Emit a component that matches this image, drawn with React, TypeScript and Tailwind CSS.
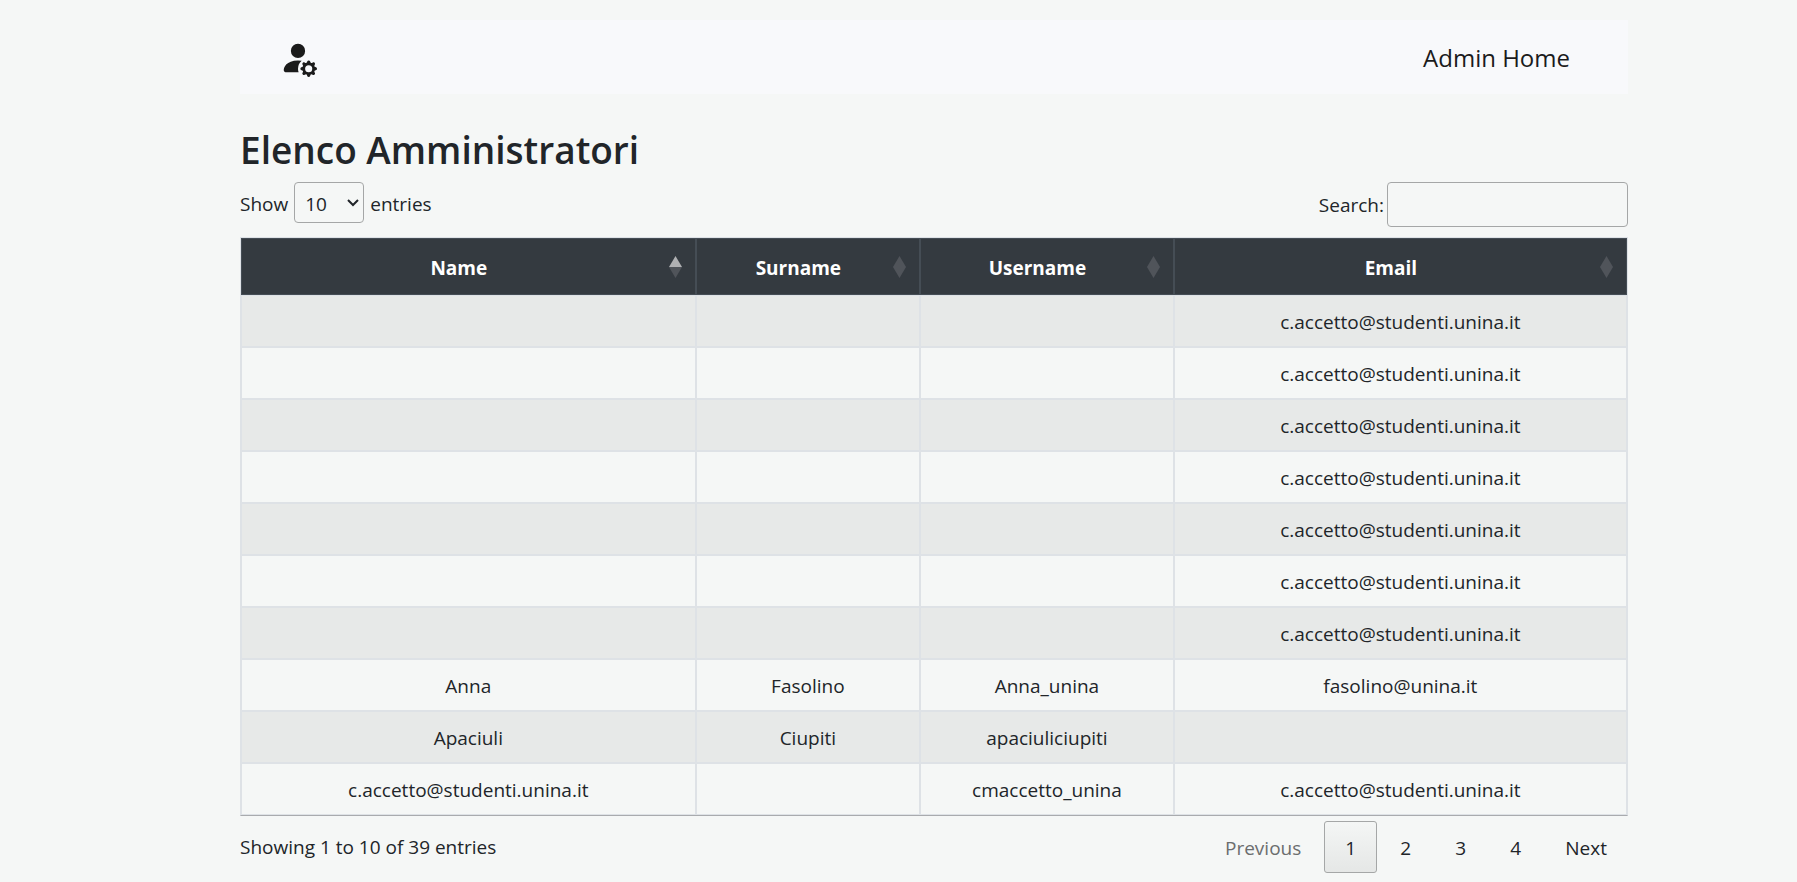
import { useState } from "react";
import { BsPersonFillGear } from "react-icons/bs";

type Admin = { name: string; surname: string; username: string; email: string };

const blank: Admin = { name: "", surname: "", username: "", email: "c.accetto@studenti.unina.it" };

const admins: Admin[] = [
  blank,
  blank,
  blank,
  blank,
  blank,
  blank,
  blank,
  { name: "Anna", surname: "Fasolino", username: "Anna_unina", email: "fasolino@unina.it" },
  { name: "Apaciuli", surname: "Ciupiti", username: "apaciuliciupiti", email: "" },
  { name: "c.accetto@studenti.unina.it", surname: "", username: "cmaccetto_unina", email: "c.accetto@studenti.unina.it" },
];

const columns = ["Name", "Surname", "Username", "Email"];

function SortIcon({ ascending }: { ascending: boolean }) {
  return (
    <svg aria-hidden="true" viewBox="0 0 13 22" className="h-[22px] w-[13px] shrink-0">
      <path d="M6.5 0 13 11H0z" fill={ascending ? "#b0b1b3" : "#50545a"} />
      <path d="M0 11h13L6.5 22z" fill="#50545a" />
    </svg>
  );
}

function Navbar() {
  return (
    <nav className="flex h-[74px] items-center justify-between bg-[#f8f9fb] pr-[58px] pl-[39px] text-[#1b1b1b]">
      <a href="#" aria-label="Admin" className="pt-0.5">
        <BsPersonFillGear className="size-[38px]" />
      </a>
      <a href="#" className="pt-0.5 text-[24px] leading-9">
        Admin Home
      </a>
    </nav>
  );
}

function AdminTable() {
  return (
    <table className="w-full table-fixed border-separate border-spacing-0 border border-[#dee2e6] border-b-[#a9abae] text-center">
      <colgroup>
        <col className="w-[32.8%]" />
        <col className="w-[16.2%]" />
        <col className="w-[18.3%]" />
        <col className="w-[32.7%]" />
      </colgroup>
      <thead>
        <tr>
          {columns.map((column, index) => (
            <th
              key={column}
              aria-sort={index === 0 ? "ascending" : "none"}
              className="border border-[#454d55] bg-[#343a40] p-0 font-bold text-white"
            >
              <button type="button" className="flex h-[55px] w-full items-center gap-[3px] pr-[13px] pl-[10px]">
                <span className="flex-1 pt-0.5">{column}</span>
                <SortIcon ascending={index === 0} />
              </button>
            </th>
          ))}
        </tr>
      </thead>
      <tbody>
        {admins.map((admin, index) => (
          <tr key={index} className="h-[52px] odd:bg-[#e7e9e8]">
            <td className="border border-[#dee2e6] pt-0.5">{admin.name}</td>
            <td className="border border-[#dee2e6] pt-0.5">{admin.surname}</td>
            <td className="border border-[#dee2e6] pt-0.5">{admin.username}</td>
            <td className="border border-[#dee2e6] pt-0.5">{admin.email}</td>
          </tr>
        ))}
      </tbody>
    </table>
  );
}

function Pagination() {
  const base = "h-[52px] min-w-[53px] rounded-[3px] border px-5 pt-0.5";
  return (
    <div className="flex gap-[2px]">
      <button type="button" disabled className={`${base} border-transparent text-[#6b6d6e]`}>
        Previous
      </button>
      <button
        type="button"
        aria-current="page"
        className={`${base} border-[#a5a7a7] bg-linear-to-b from-[#f4f6f5] to-[#e5e7e6]`}
      >
        1
      </button>
      {["2", "3", "4", "Next"].map((label) => (
        <button key={label} type="button" className={`${base} border-transparent`}>
          {label}
        </button>
      ))}
    </div>
  );
}

export default function App() {
  const [size, setSize] = useState("10");
  const [query, setQuery] = useState("");

  return (
    <div className="min-h-screen bg-[#f5f7f6] pt-5 pl-[71px] font-['Open_Sans',sans-serif] text-[19px] leading-[30px] text-[#212529]">
      <div className="mx-auto max-w-[1388px]">
        <Navbar />
        <h1 className="mt-8 text-[37px] leading-[48px] font-semibold">Elenco Amministratori</h1>
        <div className="mt-2 flex items-start justify-between">
          <label className="flex items-baseline gap-[6px]">
            Show
            <span className="relative flex items-baseline">
              <select
                value={size}
                onChange={(event) => setSize(event.target.value)}
                className="h-[41px] w-[70px] appearance-none rounded-[4px] border border-[#a5a7a7] bg-transparent pt-0.5 pl-[10px]"
              >
                <option>10</option>
                <option>25</option>
                <option>50</option>
                <option>100</option>
              </select>
              <svg
                aria-hidden="true"
                viewBox="0 0 12 8"
                className="pointer-events-none absolute top-[17px] right-[5px] h-2 w-3"
                fill="none"
                stroke="#212529"
                strokeWidth="2"
              >
                <path d="M1 1l5 5 5-5" />
              </svg>
            </span>
            entries
          </label>
          <label className="flex items-center gap-[3px]">
            Search:
            <input
              type="search"
              value={query}
              onChange={(event) => setQuery(event.target.value)}
              className="h-[45px] w-[241px] rounded-[4px] border border-[#a5a7a7] bg-transparent px-2"
            />
          </label>
        </div>
        <div className="mt-[10px]">
          <AdminTable />
        </div>
        <div className="mt-[5px] flex items-start justify-between">
          <p className="pt-[11px]">Showing 1 to 10 of 39 entries</p>
          <Pagination />
        </div>
      </div>
    </div>
  );
}
